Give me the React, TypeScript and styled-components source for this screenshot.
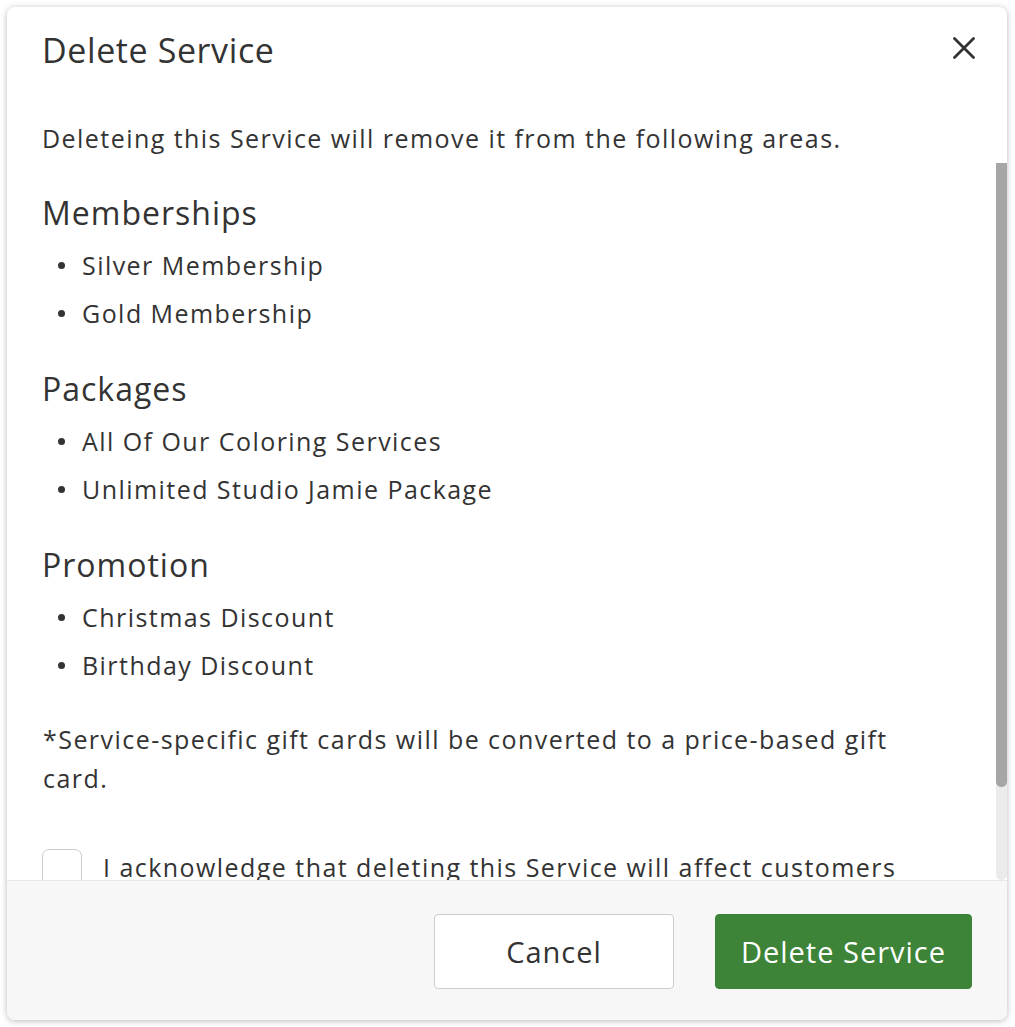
import styled, { createGlobalStyle } from 'styled-components';

const GlobalStyle = createGlobalStyle`
  html, body {
    margin: 0;
    padding: 0;
    background: #ffffff;
  }
  body {
    font-family: "Open Sans", "Liberation Sans", sans-serif;
    color: #333333;
  }
`;

const Modal = styled.div`
  margin: 7px;
  width: 1000px;
  height: 1013px;
  display: flex;
  flex-direction: column;
  background: #ffffff;
  border-radius: 8px;
  box-shadow: 0 1px 6px rgba(0, 0, 0, 0.28);
  overflow: hidden;
`;

const Header = styled.div`
  height: 86px;
  display: flex;
  align-items: center;
  justify-content: space-between;
  padding: 0 32px 0 35px;
`;

const Title = styled.h2`
  margin: 0;
  font-size: 34px;
  font-weight: 400;
  letter-spacing: 0.6px;
  color: #333;
`;

const CloseButton = styled.button`
  border: 0;
  background: transparent;
  padding: 0;
  width: 22px;
  height: 22px;
  display: flex;
  cursor: pointer;
  margin-top: -4px;
`;

const Intro = styled.p`
  margin: 0;
  padding: 27px 35px 7px;
  font-size: 25px;
  letter-spacing: 1.45px;
  line-height: 36px;
`;

const ScrollArea = styled.div`
  flex: 1;
  min-height: 0;
  display: flex;
`;

const Content = styled.div`
  flex: 1;
  overflow: hidden;
  padding: 28px 40px 20px 35px;
`;

const Rail = styled.div`
  width: 11px;
  flex-shrink: 0;
  background: #ebebeb;
  border-radius: 0 0 6px 6px;
`;

const Thumb = styled.div`
  height: 624px;
  background: #a6a6a6;
  border-radius: 0 0 6px 6px;
`;

const SectionTitle = styled.h3<{ $first?: boolean }>`
  margin: ${(p) => (p.$first ? '0' : '30px')} 0 6px;
  font-size: 32px;
  letter-spacing: 1px;
  line-height: 44px;
  font-weight: 400;
`;

const List = styled.ul`
  margin: 0;
  padding: 0;
  list-style: none;
`;

const Item = styled.li`
  display: flex;
  align-items: center;
  font-size: 25px;
  letter-spacing: 1.45px;
  line-height: 48px;
`;

const Dot = styled.span`
  width: 7px;
  height: 7px;
  border-radius: 50%;
  background: #333;
  margin: 0 17px 0 16px;
  flex-shrink: 0;
`;

const Note = styled.p`
  margin: 31px 0 0;
  font-size: 25px;
  letter-spacing: 1.45px;
  line-height: 39px;
  padding-left: 1px;
`;

const AckRow = styled.label`
  margin-top: 50px;
  display: flex;
  align-items: flex-start;
  gap: 21px;
  font-size: 25px;
  letter-spacing: 1.45px;
  line-height: 39px;
  padding-left: 0;
`;

const Box = styled.span`
  flex-shrink: 0;
  width: 38px;
  height: 38px;
  border: 1px solid #cccccc;
  border-radius: 7px;
  background: #fff;
  margin-top: 1px;
`;

const Footer = styled.div`
  height: 139px;
  flex-shrink: 0;
  border-top: 1px solid #e6e6e6;
  background: #f7f7f7;
  display: flex;
  align-items: center;
  justify-content: flex-end;
  gap: 41px;
  padding-right: 35px;
`;

const Button = styled.button<{ $primary?: boolean }>`
  height: 75px;
  width: ${(p) => (p.$primary ? '257px' : '240px')};
  border-radius: 4px;
  font-family: "Open Sans", "Liberation Sans", sans-serif;
  font-size: 29px;
  letter-spacing: 1px;
  padding: 0;
  cursor: pointer;
  border: 1px solid ${(p) => (p.$primary ? '#3d8439' : '#cccccc')};
  background: ${(p) => (p.$primary ? '#3d8439' : '#ffffff')};
  color: ${(p) => (p.$primary ? '#ffffff' : '#333333')};
  margin-top: 2px;
`;

const sections = [
  { title: 'Memberships', items: ['Silver Membership', 'Gold Membership'] },
  { title: 'Packages', items: ['All Of Our Coloring Services', 'Unlimited Studio Jamie Package'] },
  { title: 'Promotion', items: ['Christmas Discount', 'Birthday Discount'] },
];

export default function App() {
  return (
    <>
      <GlobalStyle />
      <Modal>
        <Header>
          <Title>Delete Service</Title>
          <CloseButton aria-label="Close">
            <svg width="22" height="22" viewBox="0 0 22 22">
              <path d="M1.5 1.5 L20.5 20.5 M20.5 1.5 L1.5 20.5" stroke="#333" strokeWidth="2.8" strokeLinecap="round" />
            </svg>
          </CloseButton>
        </Header>
        <Intro>Deleteing this Service will remove it from the following areas.</Intro>
        <ScrollArea>
          <Content>
            {sections.map((s, i) => (
              <div key={s.title}>
                <SectionTitle $first={i === 0}>{s.title}</SectionTitle>
                <List>
                  {s.items.map((it) => (
                    <Item key={it}>
                      <Dot />
                      {it}
                    </Item>
                  ))}
                </List>
              </div>
            ))}
            <Note>*Service-specific gift cards will be converted to a price-based gift card.</Note>
            <AckRow>
              <Box />
              <span>
                I acknowledge that deleting this Service will affect customers who have purchased
                these memberships, packages and promotions.
              </span>
            </AckRow>
          </Content>
          <Rail>
            <Thumb />
          </Rail>
        </ScrollArea>
        <Footer>
          <Button>Cancel</Button>
          <Button $primary>Delete Service</Button>
        </Footer>
      </Modal>
    </>
  );
}
